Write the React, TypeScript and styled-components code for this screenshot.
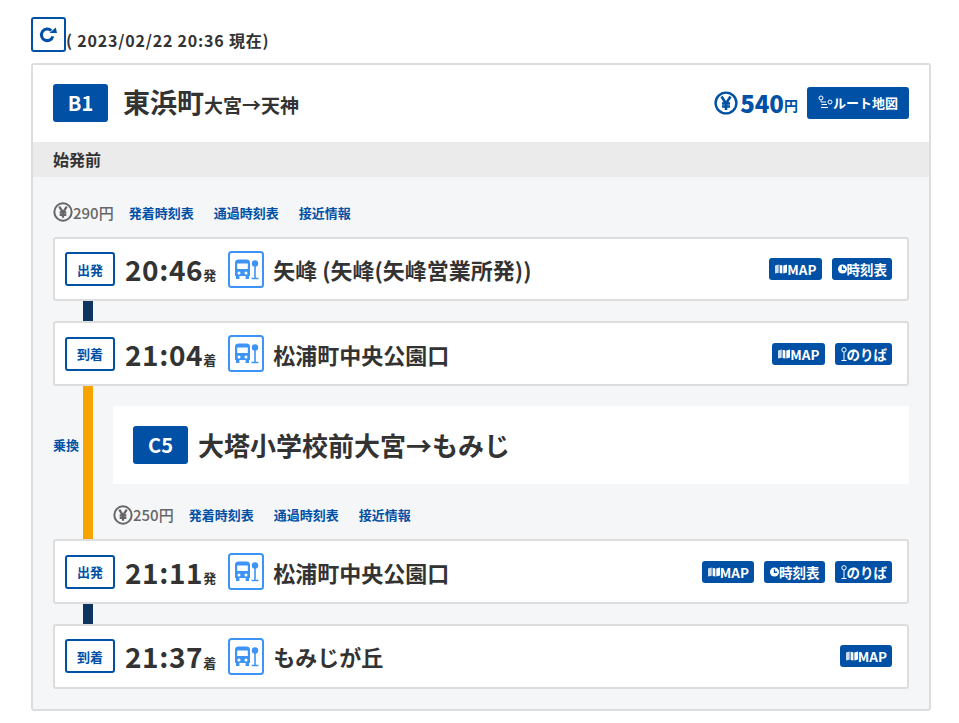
import React from 'react'
import styled, { createGlobalStyle } from 'styled-components'

const BLUE = '#0050a5'
const TEXT = '#333'

const GlobalStyle = createGlobalStyle`
  html, body {
    margin: 0;
    padding: 0;
    background: #fff;
    font-family: 'Noto Sans CJK JP', 'Noto Sans', sans-serif;
    color: ${TEXT};
  }
  * {
    box-sizing: border-box;
  }
`

type LinkKind = 'map' | 'time' | 'stop'

type Stop = {
  kind: '出発' | '到着'
  time: string
  suffix: string
  name: string
  links: LinkKind[]
}

const YenIcon = ({ size, color }: { size: number; color: string }) => (
  <svg width={size} height={size} viewBox="0 0 24 24" fill="none" stroke={color}>
    <circle cx="12" cy="12" r="10.4" strokeWidth="2.4" />
    <path d="M7.5 5.5 12 12.5 16.5 5.5M12 12.5V19M8 12.5h8M8 15.5h8" strokeWidth="2.6" />
  </svg>
)

const ReloadIcon = () => (
  <svg width="20" height="20" viewBox="0 0 20 20" fill="none">
    <path d="M14.8 12.3A5.8 5.8 0 1 1 13.2 6.6" stroke={BLUE} strokeWidth="3" />
    <path d="M11.5 9H19L17.8 3.5z" fill={BLUE} />
  </svg>
)

const RouteIcon = () => (
  <svg width="15" height="15" viewBox="0 0 15 15" fill="none" stroke="#fff" strokeWidth="1">
    <circle cx="3" cy="3" r="2" />
    <circle cx="12" cy="7" r="2" />
    <path d="M3 5.5V7h5M9 9.5H3.5M3 12.5h7" />
  </svg>
)

const MapIcon = () => (
  <svg width="12" height="10" viewBox="0 0 13 10" fill="#fff">
    <path d="M0 1.2 4 .2V9L0 10z" opacity="0.8" />
    <path d="M5 .4 8 1.2V10L5 9.2zM9 1.2 13 0V8.8L9 10z" />
  </svg>
)

const ClockIcon = () => (
  <svg width="9" height="10" viewBox="0 0 10 11">
    <circle cx="5" cy="5.5" r="5" fill="#fff" />
    <path d="M5 2.4V5.8H7.8" fill="none" stroke={BLUE} strokeWidth="1.5" />
  </svg>
)

const PinIcon = () => (
  <svg width="6" height="14" viewBox="0 0 6 14" fill="none" stroke="#fff" strokeWidth="1">
    <circle cx="3" cy="2.8" r="2.2" />
    <path d="M3 5v8.5M.5 13.5h5" />
  </svg>
)

const BusStopIcon = () => (
  <svg width="36" height="37" viewBox="0 0 36 37" fill="none">
    <rect x="1" y="1" width="34" height="35" rx="2.5" stroke="#3d94f6" strokeWidth="2" />
    <path
      d="M7 11.5C7 9.5 8.5 8.5 10.5 8.5h8c2 0 3.5 1 3.5 3V25h-1v3h-3.4v-3H11.4v3H8v-3H7zM9.2 12.5v5.5h10.6v-5.5zM11 20.4a1.5 1.5 0 1 0 0 3 1.5 1.5 0 0 0 0-3zM18 20.4a1.5 1.5 0 1 0 0 3 1.5 1.5 0 0 0 0-3z"
      fill="#3d94f6"
      fillRule="evenodd"
    />
    <circle cx="27" cy="12.5" r="3.2" fill="#3d94f6" />
    <path d="M27 15v12.5M23.6 27.5h6.8" stroke="#3d94f6" strokeWidth="1.6" />
  </svg>
)

const LINKS: Record<LinkKind, { label: string; icon: React.ReactNode }> = {
  map: { label: 'MAP', icon: <MapIcon /> },
  time: { label: '時刻表', icon: <ClockIcon /> },
  stop: { label: 'のりば', icon: <PinIcon /> },
}

const StopRow = ({ stop }: { stop: Stop }) => (
  <Row>
    <KindBadge>{stop.kind}</KindBadge>
    <Time>{stop.time}</Time>
    <TimeSuffix>{stop.suffix}</TimeSuffix>
    <BusStopIcon />
    <StopName>{stop.name}</StopName>
    <RowLinks>
      {stop.links.map(link => (
        <SmallButton key={link}>
          {LINKS[link].icon}
          {LINKS[link].label}
        </SmallButton>
      ))}
    </RowLinks>
  </Row>
)

const FareRow = ({ fare }: { fare: string }) => (
  <Fares>
    <FareAmount>
      <YenIcon size={20} color="#666" />
      {fare}
    </FareAmount>
    <FareLink>発着時刻表</FareLink>
    <FareLink>通過時刻表</FareLink>
    <FareLink>接近情報</FareLink>
  </Fares>
)

const App = () => (
  <Page>
    <GlobalStyle />
    <TopLine>
      <ReloadButton type="button">
        <ReloadIcon />
      </ReloadButton>
      <Updated>( 2023/02/22 20:36 現在)</Updated>
    </TopLine>
    <Card>
      <Header>
        <LineBadge>B1</LineBadge>
        <Title>
          東浜町<small>大宮→天神</small>
        </Title>
        <TotalFare>
          <YenIcon size={24} color={BLUE} />
          <strong>540</strong>
          <small>円</small>
        </TotalFare>
        <RouteButton type="button">
          <RouteIcon />
          ルート地図
        </RouteButton>
      </Header>
      <Status>始発前</Status>
      <Body>
        <FareRow fare="290円" />
        <StopRow stop={{ kind: '出発', time: '20:46', suffix: '発', name: '矢峰 (矢峰(矢峰営業所発))', links: ['map', 'time'] }} />
        <Connector />
        <StopRow stop={{ kind: '到着', time: '21:04', suffix: '着', name: '松浦町中央公園口', links: ['map', 'stop'] }} />
        <Transfer>
          <TransferLabel>乗換</TransferLabel>
          <TransferLine />
          <TransferContent>
            <TransferHead>
              <LineBadge>C5</LineBadge>
              <TransferTitle>大塔小学校前大宮→もみじ</TransferTitle>
            </TransferHead>
            <FareRow fare="250円" />
          </TransferContent>
        </Transfer>
        <StopRow stop={{ kind: '出発', time: '21:11', suffix: '発', name: '松浦町中央公園口', links: ['map', 'time', 'stop'] }} />
        <Connector />
        <StopRow stop={{ kind: '到着', time: '21:37', suffix: '着', name: 'もみじが丘', links: ['map'] }} />
      </Body>
    </Card>
  </Page>
)

export default App

const Page = styled('div')`
  width: 959px;
  padding: 17px 28px 0 31px;
`

const TopLine = styled('div')`
  display: flex;
  align-items: flex-end;
  height: 35px;
`

const ReloadButton = styled('button')`
  display: flex;
  align-items: center;
  justify-content: center;
  width: 35px;
  height: 35px;
  padding: 0 2px 1px 0;
  background: #fff;
  border: 2px solid ${BLUE};
  border-radius: 3px;
`

const Updated = styled('span')`
  margin-bottom: 2px;
  font-size: 16px;
  font-weight: 700;
  line-height: 20px;
  letter-spacing: 0.8px;
  color: ${TEXT};
`

const Card = styled('div')`
  margin-top: 11px;
  width: 900px;
  border: 2px solid #ddd;
  border-radius: 3px;
  background: #f5f6f8;
`

const Header = styled('div')`
  display: flex;
  align-items: center;
  height: 77px;
  padding: 0 20px 2px;
  background: #fff;
`

const LineBadge = styled('div')`
  flex: none;
  display: flex;
  align-items: center;
  justify-content: center;
  width: 55px;
  height: 38px;
  padding-bottom: 1px;
  background: ${BLUE};
  border-radius: 3px;
  color: #fff;
  font-size: 20px;
  font-weight: 700;
`

const Title = styled('div')`
  margin: 2px 0 0 15px;
  font-size: 27px;
  font-weight: 700;
  line-height: 36px;
  color: ${TEXT};
  small {
    font-size: 19px;
  }
`

const TotalFare = styled('div')`
  display: flex;
  align-items: center;
  margin-left: auto;
  color: ${BLUE};
  font-weight: 700;
  strong {
    margin-left: 2px;
    font-size: 24px;
  }
  small {
    margin-top: 5px;
    font-size: 14px;
  }
`

const RouteButton = styled('button')`
  display: flex;
  align-items: center;
  justify-content: center;
  width: 102px;
  height: 32px;
  margin-left: 9px;
  padding: 0;
  background: ${BLUE};
  border: 0;
  border-radius: 3px;
  color: #fff;
  font-family: inherit;
  font-size: 13px;
  font-weight: 700;
`

const Status = styled('div')`
  height: 35px;
  padding: 0 20px;
  background: #ebebeb;
  font-size: 16px;
  font-weight: 700;
  line-height: 35px;
  color: ${TEXT};
`

const Body = styled('div')`
  padding: 20px 20px 20.5px;
`

const Fares = styled('div')`
  display: flex;
  align-items: center;
  height: 30px;
  margin-bottom: 9.75px;
`

const FareAmount = styled('span')`
  display: flex;
  align-items: center;
  margin-right: 15px;
  font-size: 15px;
  font-weight: 500;
  color: #666;
`

const FareLink = styled('a')`
  margin-right: 20px;
  font-size: 13px;
  font-weight: 700;
  color: ${BLUE};
`

const Row = styled('div')`
  display: flex;
  align-items: center;
  height: 64.6px;
  padding: 0 15px 0 10px;
  background: #fff;
  border: 2px solid #ddd;
  border-radius: 3px;
`

const KindBadge = styled('div')`
  flex: none;
  display: flex;
  align-items: center;
  justify-content: center;
  width: 50px;
  height: 34px;
  background: #fff;
  border: 2px solid ${BLUE};
  border-radius: 3px;
  font-size: 13px;
  font-weight: 700;
  color: ${BLUE};
`

const Time = styled('span')`
  margin-left: 10px;
  font-size: 28px;
  font-weight: 700;
  letter-spacing: 0.6px;
  color: ${TEXT};
`

const TimeSuffix = styled('span')`
  align-self: flex-end;
  margin: 0 12px 0 0;
  padding-bottom: 15px;
  font-size: 13px;
  font-weight: 700;
  color: ${TEXT};
`

const StopName = styled('div')`
  margin-left: 9px;
  font-size: 22px;
  font-weight: 700;
  color: ${TEXT};
`

const RowLinks = styled('div')`
  display: flex;
  gap: 10px;
  margin-left: auto;
`

const SmallButton = styled('a')`
  display: flex;
  align-items: center;
  height: 22px;
  padding: 0 5px 0 6px;
  background: ${BLUE};
  border-radius: 3px;
  color: #fff;
  font-size: 13.5px;
  font-weight: 700;
`

const Connector = styled('div')`
  width: 10px;
  height: 20px;
  margin-left: 30px;
  background: #0e3560;
`

const Transfer = styled('div')`
  display: flex;
  height: 153.4px;
`

const TransferLabel = styled('div')`
  width: 30px;
  padding-top: 50px;
  font-size: 13px;
  font-weight: 700;
  line-height: 18px;
  color: ${BLUE};
`

const TransferLine = styled('div')`
  width: 10px;
  background: #f8a400;
`

const TransferContent = styled('div')`
  flex: 1;
  margin-left: 20px;
  padding-top: 20px;
`

const TransferHead = styled('div')`
  display: flex;
  align-items: center;
  height: 78px;
  margin-bottom: 16px;
  padding: 0 20px;
  background: #fff;
`

const TransferTitle = styled('div')`
  margin-left: 10px;
  font-size: 26px;
  font-weight: 700;
  color: ${TEXT};
`
